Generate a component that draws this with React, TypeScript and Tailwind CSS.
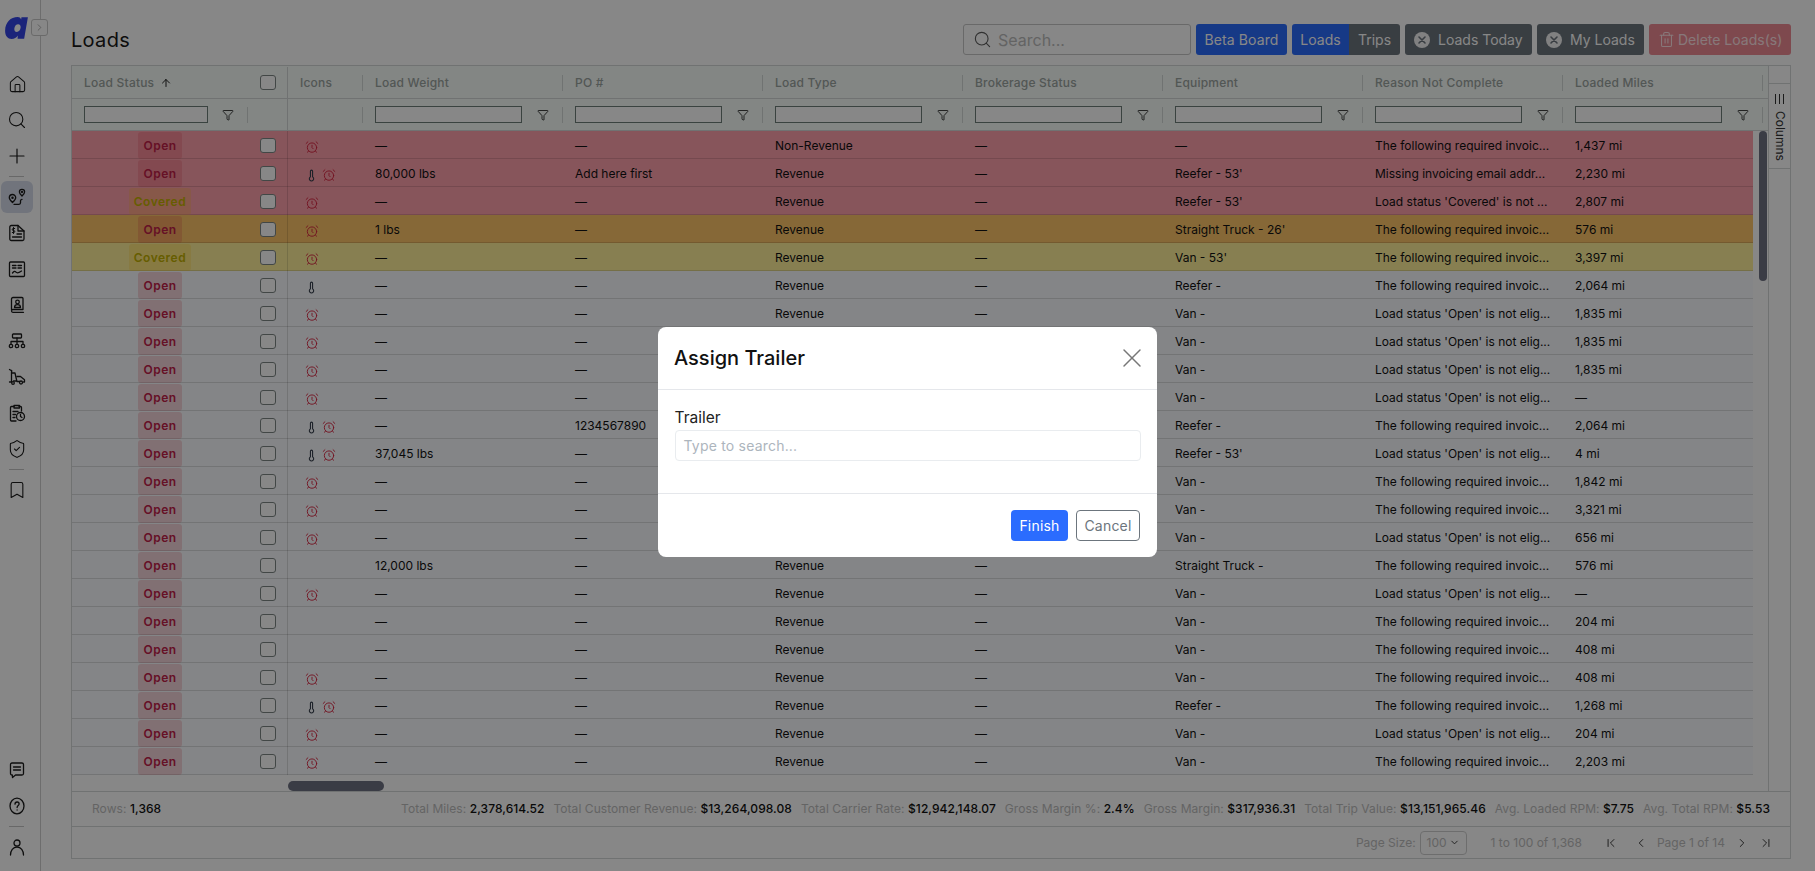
import React from "react";
import {
  AlarmClock, ArrowUp, ChevronDown, ChevronFirst, ChevronLast, ChevronLeft, ChevronRight,
  Filter, House, Plus, Search, Thermometer, Trash2, X, Bookmark, ShieldCheck,
} from "lucide-react";

const FOLLOW = "The following required invoic...";
const STATUS = "Load status 'Open' is not elig...";

type Row = {
  s: "Open" | "Covered"; tone?: "red" | "orange" | "yellow"; t?: boolean; a?: boolean;
  w?: string; p?: string; ty?: string; e?: string; r: string; m: string;
};

const rows: Row[] = [
  { s: "Open", tone: "red", a: true, ty: "Non-Revenue", r: FOLLOW, m: "1,437 mi" },
  { s: "Open", tone: "red", t: true, a: true, w: "80,000 lbs", p: "Add here first", e: "Reefer - 53'", r: "Missing invoicing email addr...", m: "2,230 mi" },
  { s: "Covered", tone: "red", a: true, e: "Reefer - 53'", r: "Load status 'Covered' is not ...", m: "2,807 mi" },
  { s: "Open", tone: "orange", a: true, w: "1 lbs", e: "Straight Truck - 26'", r: FOLLOW, m: "576 mi" },
  { s: "Covered", tone: "yellow", a: true, e: "Van - 53'", r: FOLLOW, m: "3,397 mi" },
  { s: "Open", t: true, e: "Reefer -", r: FOLLOW, m: "2,064 mi" },
  { s: "Open", a: true, e: "Van -", r: STATUS, m: "1,835 mi" },
  { s: "Open", a: true, e: "Van -", r: STATUS, m: "1,835 mi" },
  { s: "Open", a: true, e: "Van -", r: STATUS, m: "1,835 mi" },
  { s: "Open", a: true, e: "Van -", r: STATUS, m: "—" },
  { s: "Open", t: true, a: true, p: "1234567890", e: "Reefer -", r: FOLLOW, m: "2,064 mi" },
  { s: "Open", t: true, a: true, w: "37,045 lbs", e: "Reefer - 53'", r: STATUS, m: "4 mi" },
  { s: "Open", a: true, e: "Van -", r: FOLLOW, m: "1,842 mi" },
  { s: "Open", a: true, e: "Van -", r: FOLLOW, m: "3,321 mi" },
  { s: "Open", a: true, e: "Van -", r: STATUS, m: "656 mi" },
  { s: "Open", w: "12,000 lbs", e: "Straight Truck -", r: FOLLOW, m: "576 mi" },
  { s: "Open", a: true, e: "Van -", r: STATUS, m: "—" },
  { s: "Open", e: "Van -", r: FOLLOW, m: "204 mi" },
  { s: "Open", e: "Van -", r: FOLLOW, m: "408 mi" },
  { s: "Open", a: true, e: "Van -", r: FOLLOW, m: "408 mi" },
  { s: "Open", t: true, a: true, e: "Reefer -", r: FOLLOW, m: "1,268 mi" },
  { s: "Open", a: true, e: "Van -", r: STATUS, m: "204 mi" },
  { s: "Open", a: true, e: "Van -", r: FOLLOW, m: "2,203 mi" },
];

const cols = ["Load Weight", "PO #", "Load Type", "Brokerage Status", "Equipment", "Reason Not Complete", "Loaded Miles"];

function Ico({ children }: { children: React.ReactNode }) {
  return (
    <svg width="18" height="18" viewBox="0 0 18 18" fill="none" stroke="currentColor" strokeWidth="1.3" strokeLinecap="round" strokeLinejoin="round">
      {children}
    </svg>
  );
}

const RouteIcon = () => (
  <Ico>
    <path d="M4.500 14.500C2.500 12.600 1.300 11.300 1.300 9.700a3.200 3.200 0 0 1 6.400 0c0 1.600-1.200 2.900-3.200 4.800Z" />
    <circle cx="4.500" cy="9.700" r=".6" />
    <path d="M14 8C12.400 6.400 11.400 5.300 11.400 4a2.600 2.600 0 0 1 5.200 0C16.600 5.300 15.600 6.400 14 8Z" />
    <circle cx="14" cy="4" r=".5" />
    <path d="M6 16.300h5c.9 0 1.500-.6 1.500-1.500v-2c0-.8.500-1.300 1.500-1.500" />
  </Ico>
);
const DocIcon = () => (
  <Ico>
    <path d="M1.800 3c0-.8.600-1.500 1.500-1.500h6.700l6 5.500V15c0 .8-.7 1.500-1.500 1.500H3.300c-.9 0-1.500-.7-1.500-1.500Z" />
    <path d="M10 1.500V7h6" />
    <path d="M6.700 4.500H5c-1 0-1 2 0 2h1c1 0 1 2 0 2H4.300M5.500 3.500v6" strokeWidth="1" />
    <path d="M9 10h4.500M4.500 13h9" />
  </Ico>
);
const ReportIcon = () => (
  <Ico>
    <rect x="1.500" y="2" width="15" height="14.500" rx="1" />
    <path d="M4.500 5.500h3.500M10 5.500h3.500M4.500 8h3.500M10 8h3.500" />
    <path d="M4.500 13c1.500-2 2.500-2 3.500-.8s2 1.200 5.500-1.200" />
  </Ico>
);
const ContactIcon = () => (
  <Ico>
    <path d="M3.500 13.500V3c0-.8.600-1.500 1.500-1.500h9c.6 0 1 .4 1 1V13.500H4.800c-.8 0-1.300.6-1.300 1.300s.5 1.500 1.300 1.500H15.500" />
    <circle cx="9.500" cy="6" r="1.800" />
    <path d="M6.500 11.500c0-1.800 1.200-2.800 3-2.800s3 1 3 2.800Z" />
  </Ico>
);
const OrgIcon = () => (
  <Ico>
    <rect x="4.500" y="2" width="9" height="4" rx=".8" />
    <path d="M9 6v6M3 12v-2.500h12V12" />
    <circle cx="3" cy="14" r="1.700" />
    <circle cx="9" cy="14" r="1.700" />
    <circle cx="15" cy="14" r="1.700" />
  </Ico>
);
const TruckIcon = () => (
  <Ico>
    <path d="M1.500 1.500 4 3M3.500 2.500v11.500M3.500 5H7l1.800 8H5.500" />
    <path d="M1.500 14h2M9 8.500h3.500l4 3.200v2.300h-1" />
    <circle cx="13" cy="14.500" r="1.500" />
    <circle cx="5" cy="15" r="1.300" />
    <path d="M9 13.500h2.500" />
  </Ico>
);
const ClipIcon = () => (
  <Ico>
    <path d="M6 2.500H3.500c-.6 0-1 .4-1 1V16c0 .5.400 1 1 1H8" />
    <path d="M11 2.500h1.500c.6 0 1 .4 1 1V7" />
    <path d="M6 1.500h5.500V4H6Z" />
    <path d="M5 7.500h5M5 10.500h2.500M5 13.500h2" />
    <circle cx="12.500" cy="12.500" r="4" />
    <path d="M12.500 10.500v2l1.500 1" />
  </Ico>
);
const ChatIcon = () => (
  <Ico>
    <path d="M2.500 3.500c0-.8.600-1.500 1.500-1.500h10c.9 0 1.500.7 1.500 1.500v9c0 .8-.6 1.500-1.500 1.500H7.500L4.500 16.500 4.300 14H4c-.9 0-1.500-.7-1.500-1.500Z" />
    <path d="M5.500 6h7M5.500 9h7" />
  </Ico>
);
const HelpIcon = () => (
  <Ico>
    <ellipse cx="9" cy="9" rx="7" ry="7.800" />
    <path d="M7 7.200c0-1.300 1-2.200 2.100-2.200s2 .9 2 2c0 1.500-2 1.600-2 3.500" />
    <path d="M9.100 13v.1" />
  </Ico>
);
const UserIcon = () => (
  <Ico>
    <circle cx="9" cy="5" r="3" />
    <path d="M2.500 17c0-4.500 2.500-8 6.500-8s6.500 3.500 6.500 8" />
  </Ico>
);
const Bulb = ({ children, active }: { children: React.ReactNode; active?: boolean }) => (
  <div className="h-[36px] w-[32px] ml-[1px] flex items-center justify-center">
    <div className={`h-[32px] w-[32px] rounded-[6px] flex items-center justify-center ${active ? "bg-[#d6dcea]" : ""}`}>{children}</div>
  </div>
);
const Rule = () => (
  <div className="h-[5px] flex items-center pl-[9px]">
    <div className="h-px w-[15px] bg-[#c4c4c4]" />
  </div>
);

const CircleClose = () => (
  <svg width="16" height="16" viewBox="0 0 16 16">
    <circle cx="8" cy="8" r="8" fill="#f4f4f4" />
    <path d="M5 5l6 6M11 5l-6 6" stroke="#6c757d" strokeWidth="1.600" strokeLinecap="round" />
  </svg>
);

function Badge({ s }: { s: "Open" | "Covered" }) {
  return s === "Open" ? (
    <span className="inline-flex h-[27px] px-[5px] items-center rounded-[3px] bg-[#dc3545]/20 text-[#c02048] font-semibold tracking-[0.5px]">Open</span>
  ) : (
    <span className="inline-flex h-[27px] px-[5px] items-center rounded-[3px] bg-[#ffc107]/20 text-[#c2b000] font-semibold tracking-[0.5px]">Covered</span>
  );
}

const Check = () => <span className="block h-[15.500px] w-[15.500px] rounded-[3px] border border-[#7e8785] bg-white" />;
const Sep = () => <span className="h-[16px] w-px bg-[#d4dad8] shrink-0" />;
const Dash = ({ v }: { v?: string }) => <>{v ?? "—"}</>;

function Cell({ children }: { children?: React.ReactNode }) {
  return <div className="w-[200px] shrink-0 pl-[12px] whitespace-nowrap overflow-hidden">{children}</div>;
}

function Metric({ k, v }: { k: string; v: string }) {
  return (
    <span className="whitespace-nowrap tracking-[0.065px]">
      <span className="text-[#bdbdbd]">{k}:</span> <span className="font-medium text-[#111]">{v}</span>
    </span>
  );
}

export default function App() {
  return (
    <div className="relative flex h-[871px] w-[1815px] overflow-hidden bg-white text-[#111] [font-family:Inter,sans-serif]">
      {/* sidebar */}
      <aside className="relative flex h-full w-[41px] shrink-0 flex-col border-r border-[#cfcfcf] pt-[17px] pb-[6px] text-[#1b1b1b]">
        <svg className="ml-[5px] mb-[27px] shrink-0" width="23" height="22" viewBox="0.7 0.9 22.100 18.700" preserveAspectRatio="none" fill="none">
          <path d="M13 1C6 1 1 5.500 0.800 12.500 0.700 17 3.500 19.500 7 19.500c2.700 0 4.700-1.100 6-2.900L12.800 19.300h6.300L22.700 1.200h-6.200L16.200 3C15.400 1.700 14.400 1 13 1Zm.3 6c1.800 0 2.700 1.200 2.400 3.100-.4 2.200-1.800 3.500-3.600 3.500-1.800 0-2.700-1.200-2.400-3.100.4-2.200 1.800-3.500 3.600-3.500Z" fill="#3344e6" />
        </svg>
        <div className="absolute left-[31px] top-[19px] flex h-[17px] w-[17px] items-center justify-center rounded-[3px] border border-[#c8c8c8] bg-white text-[#aaa]">
          <ChevronRight size={11} />
        </div>
        <Bulb><House size={19} strokeWidth={1.3} /></Bulb>
        <Bulb><Search size={20} strokeWidth={1.3} /></Bulb>
        <Bulb><Plus size={24} strokeWidth={1.2} /></Bulb>
        <Rule />
        <Bulb active><RouteIcon /></Bulb>
        <Bulb><DocIcon /></Bulb>
        <Bulb><ReportIcon /></Bulb>
        <Bulb><ContactIcon /></Bulb>
        <Bulb><OrgIcon /></Bulb>
        <Bulb><TruckIcon /></Bulb>
        <Bulb><ClipIcon /></Bulb>
        <Bulb><ShieldCheck size={20} strokeWidth={1.3} /></Bulb>
        <Rule />
        <Bulb><Bookmark size={20} strokeWidth={1.3} /></Bulb>
        <div className="mt-auto" />
        <Bulb><ChatIcon /></Bulb>
        <Bulb><HelpIcon /></Bulb>
        <Rule />
        <Bulb><UserIcon /></Bulb>
      </aside>

      {/* main */}
      <main className="flex w-[1720px] ml-[30px] flex-col">
        <header className="flex h-[65px] shrink-0 items-start pt-[24px]">
          <h1 className="mt-[2px] text-[20px] leading-[28px] font-normal tracking-[0.3px] text-[#1a1a1a]">Loads</h1>
          <div className="ml-auto flex h-[31px] gap-[5px] text-[14px] text-white">
            <div className="flex w-[228px] items-center gap-[6px] rounded-[3px] border border-[#c6c6c6] px-[9px] text-[16px] text-[#bcbcbc]">
              <Search size={19} className="text-[#5d5d5d]" strokeWidth={1.4} />
              <span>Search...</span>
            </div>
            <button className="w-[91px] rounded-[3px] bg-[#2b6cfe] tracking-[0.1px]">Beta Board</button>
            <div className="flex overflow-hidden rounded-[3px]">
              <span className="flex w-[57px] items-center justify-center bg-[#2b6cfe]">Loads</span>
              <span className="flex w-[51px] items-center justify-center bg-[#6c757d]">Trips</span>
            </div>
            <button className="flex w-[127px] items-center gap-[8px] rounded-[3px] bg-[#6c757d] pl-[9px]"><CircleClose />Loads Today</button>
            <button className="flex w-[107px] items-center gap-[8px] rounded-[3px] bg-[#6c757d] pl-[9px]"><CircleClose />My Loads</button>
            <button className="flex w-[142px] items-center gap-[3px] rounded-[3px] bg-[#ee8a94] pl-[9px] text-[#ffe3e6]"><Trash2 size={17} strokeWidth={1.5} />Delete Loads(s)</button>
          </div>
        </header>

        <section className="flex h-[794px] flex-col border border-[#d3d8d8] text-[12px] text-[#111]">
          <div className="flex min-h-0 flex-1">
            <div className="flex w-[1697px] flex-col border-r border-[#d3d8d8]">
              {/* header row */}
              <div className="flex h-[33px] shrink-0 items-center border-b border-[#d3d8d8] bg-[#f7fdfa] pt-px font-medium tracking-[0.2px] text-[#9ca4a0]">
                <div className="flex w-[176px] shrink-0 items-center pl-[12px] pr-0">
                  <span>Load Status</span>
                  <ArrowUp size={12} strokeWidth={2} className="ml-[6px] text-[#222]" />
                  <span className="ml-auto"><Sep /></span>
                </div>
                <div className="flex h-full w-[40px] shrink-0 items-center border-r border-[#d3d8d8] pl-[12px]"><Check /></div>
                <div className="flex w-[75px] shrink-0 items-center pl-[12px]">
                  <span>Icons</span><span className="ml-auto flex"><Sep /></span>
                </div>
                {cols.map((c) => (
                  <div key={c} className="flex w-[200px] shrink-0 items-center pl-[12px]">
                    <span>{c}</span><span className="ml-auto flex"><Sep /></span>
                  </div>
                ))}
              </div>
              {/* filter row */}
              <div className="flex h-[32px] shrink-0 items-center border-b border-[#d3d8d8] bg-[#f7fdfa]">
                <div className="flex w-[176px] shrink-0 items-center pl-[12px]">
                  <span className="h-[17px] w-[124px] border border-[#6f7f7a] bg-white" />
                  <Filter size={12} strokeWidth={1.6} className="ml-[14px] text-[#111]" />
                  <span className="ml-auto flex"><Sep /></span>
                </div>
                <div className="h-full w-[40px] shrink-0 border-r border-[#d3d8d8]" />
                <div className="flex w-[75px] shrink-0 justify-end"><Sep /></div>
                {cols.map((c) => (
                  <div key={c} className="flex w-[200px] shrink-0 items-center pl-[12px]">
                    <span className="h-[17px] w-[147px] border border-[#6f7f7a] bg-white" />
                    <Filter size={12} strokeWidth={1.6} className="ml-[15px] text-[#111]" />
                    <span className="ml-auto flex"><Sep /></span>
                  </div>
                ))}
              </div>
              {/* body */}
              <div className="flex min-h-0 flex-1">
                <div className="w-[1682px] overflow-hidden">
                  {rows.map((r, i) => {
                    const hidden = i >= 7 && i <= 14;
                    return (
                      <div
                        key={i}
                        className={`flex h-[28px] w-[1691px] items-center border-b border-black/[0.13] pt-[2px] ${
                          r.tone === "red" ? "bg-[#ffa0ac]" : r.tone === "orange" ? "bg-[#fdc468]" : r.tone === "yellow" ? "bg-[#fff09a]" : "bg-[#fafcff]"
                        }`}
                      >
                        <div className="flex w-[176px] shrink-0 justify-center"><Badge s={r.s} /></div>
                        <div className="flex h-[28px] -mt-[2px] w-[40px] shrink-0 items-center border-r border-black/[0.13] pl-[12px] pt-[2px]"><Check /></div>
                        <div className="flex w-[75px] shrink-0 items-center pl-[15px] pt-[3px]">
                          {r.t && <span className="flex w-[17px] justify-center"><Thermometer size={13} strokeWidth={2} className="text-[#333c4a]" /></span>}
                          {r.a && <span className="flex w-[17px] justify-center"><AlarmClock size={14} strokeWidth={1.6} className="text-[#d9233f]" /></span>}
                        </div>
                        <Cell><Dash v={r.w} /></Cell>
                        <Cell><Dash v={r.p} /></Cell>
                        <Cell>{hidden ? null : r.ty ?? "Revenue"}</Cell>
                        <Cell>{hidden ? null : "—"}</Cell>
                        <Cell><Dash v={r.e} /></Cell>
                        <Cell>{r.r}</Cell>
                        <Cell>{r.m}</Cell>
                      </div>
                    );
                  })}
                  <div className="flex h-[16px] items-end pl-[216px]">
                    <div className="h-[10px] w-[96px] rounded-[5px] bg-[#6e7183]" />
                  </div>
                </div>
                <div className="w-[15px] pl-[6px]">
                  <div className="h-[150px] w-[8px] rounded-[4px] bg-[#6e7183]" />
                </div>
              </div>
            </div>
            {/* columns rail */}
            <div className="flex w-[21px] flex-col pt-[17px]">
              <div className="flex h-[86px] flex-col items-center border-y border-[#d3d8d8] pt-[10px] text-[#333]">
                <svg width="11" height="10" viewBox="0 0 11 10" stroke="currentColor" strokeWidth="1"><path d="M1.500 0v10M5.500 0v10M9.500 0v10" /></svg>
                <span className="mt-[7px] [writing-mode:vertical-rl] leading-[12px]">Columns</span>
              </div>
            </div>
          </div>
          {/* totals */}
          <div className="flex h-[35px] shrink-0 items-center border-t border-[#d3d8d8] pl-[20px] pr-[20px]">
            <Metric k="Rows" v="1,368" />
            <div className="ml-auto flex gap-[9px]">
              <Metric k="Total Miles" v="2,378,614.52" />
              <Metric k="Total Customer Revenue" v="$13,264,098.08" />
              <Metric k="Total Carrier Rate" v="$12,942,148.07" />
              <Metric k="Gross Margin %" v="2.4%" />
              <Metric k="Gross Margin" v="$317,936.31" />
              <Metric k="Total Trip Value" v="$13,151,965.46" />
              <Metric k="Avg. Loaded RPM" v="$7.75" />
              <Metric k="Avg. Total RPM" v="$5.53" />
            </div>
          </div>
          {/* pagination */}
          <div className="flex h-[32px] shrink-0 items-center justify-end border-t border-[#d3d8d8] pr-[17px] text-[#bdbdbd]">
            <span>Page Size:</span>
            <span className="ml-[4px] flex h-[24px] w-[47px] items-center justify-center gap-[2px] rounded-[4px] border border-[#cfcfcf]">100<ChevronDown size={11} className="text-[#333]" /></span>
            <span className="ml-[24px]">1 to 100 of 1,368</span>
            <ChevronFirst size={14} strokeWidth={1.5} className="ml-[22px] text-[#222]" />
            <ChevronLeft size={14} strokeWidth={1.5} className="ml-[16px] text-[#222]" />
            <span className="ml-[9px]">Page 1 of 14</span>
            <ChevronRight size={14} strokeWidth={1.5} className="ml-[10px] text-[#222]" />
            <ChevronLast size={14} strokeWidth={1.5} className="ml-[10px] text-[#222]" />
          </div>
        </section>
      </main>

      {/* backdrop and modal */}
      <div className="absolute inset-0 flex items-start justify-center bg-black/[0.47] pt-[326.500px]">
        <div className="h-[230.500px] w-[499px] rounded-[8px] bg-white">
          <div className="flex h-[63px] items-center border-b border-[#e5e7eb] pl-[16px] pr-[9px]">
            <span className="text-[20px] font-medium leading-[28px] text-[#111]">Assign Trailer</span>
            <X size={32} strokeWidth={1.1} className="ml-auto text-[#777]" />
          </div>
          <div className="h-[104px] border-b border-[#e5e7eb] px-[16.500px] pt-[16px]">
            <div className="text-[15.500px] leading-[24px] text-[#222]">Trailer</div>
            <div className="flex h-[31px] items-center rounded-[4px] border border-[#e9ecef] pl-[8px] text-[14px] tracking-[0.2px] text-[#adb5bd]">Type to search...</div>
          </div>
          <div className="flex justify-end gap-[8px] pr-[17px] pt-[16px] text-[14px] tracking-[0.2px]">
            <button className="h-[31px] w-[57px] rounded-[4px] bg-[#2b6cfe] text-white">Finish</button>
            <button className="h-[31px] w-[64px] rounded-[4px] border border-[#6c757d] text-[#6c757d]">Cancel</button>
          </div>
        </div>
      </div>
    </div>
  );
}
